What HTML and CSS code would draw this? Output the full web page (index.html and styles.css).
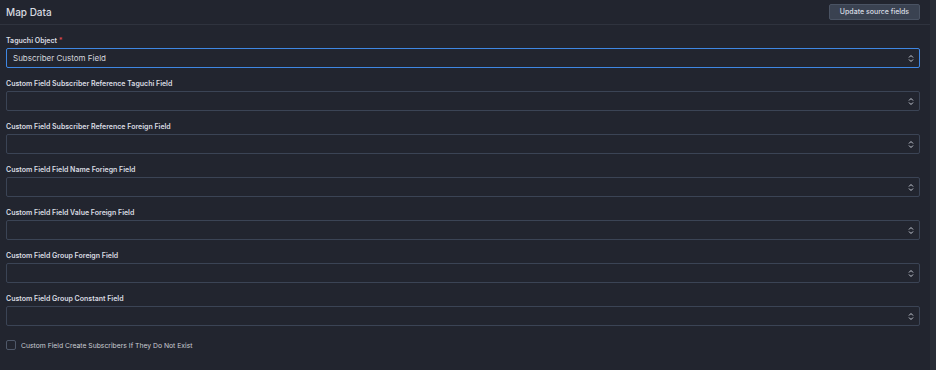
FILE: index.html
```html
<!DOCTYPE html>
<html>
<head>
<meta charset="utf-8">
<link rel="stylesheet" href="styles.css">
</head>
<body>
<div class="page">
  <main class="main">
    <header class="header">
      <h1 class="title">Map Data</h1>
      <button class="btn">Update source fields</button>
    </header>
    <form class="form">
      <div class="field">
        <label class="label">Taguchi Object <span class="req">*</span></label>
        <div class="select focused"><span class="value">Subscriber Custom Field</span><svg class="chev" viewBox="0 0 6 9"><path d="M1 3.5 L3 1.5 L5 3.5 M1 5.5 L3 7.5 L5 5.5" fill="none" stroke="#c9ced8" stroke-width="1"/></svg></div>
      </div>
      <div class="field">
        <label class="label">Custom Field Subscriber Reference Taguchi Field</label>
        <div class="select"><span class="value"></span><svg class="chev" viewBox="0 0 6 9"><path d="M1 3.5 L3 1.5 L5 3.5 M1 5.5 L3 7.5 L5 5.5" fill="none" stroke="#c9ced8" stroke-width="1"/></svg></div>
      </div>
      <div class="field">
        <label class="label">Custom Field Subscriber Reference Foreign Field</label>
        <div class="select"><span class="value"></span><svg class="chev" viewBox="0 0 6 9"><path d="M1 3.5 L3 1.5 L5 3.5 M1 5.5 L3 7.5 L5 5.5" fill="none" stroke="#c9ced8" stroke-width="1"/></svg></div>
      </div>
      <div class="field">
        <label class="label">Custom Field Field Name Foriegn Field</label>
        <div class="select"><span class="value"></span><svg class="chev" viewBox="0 0 6 9"><path d="M1 3.5 L3 1.5 L5 3.5 M1 5.5 L3 7.5 L5 5.5" fill="none" stroke="#c9ced8" stroke-width="1"/></svg></div>
      </div>
      <div class="field">
        <label class="label">Custom Field Field Value Foreign Field</label>
        <div class="select"><span class="value"></span><svg class="chev" viewBox="0 0 6 9"><path d="M1 3.5 L3 1.5 L5 3.5 M1 5.5 L3 7.5 L5 5.5" fill="none" stroke="#c9ced8" stroke-width="1"/></svg></div>
      </div>
      <div class="field">
        <label class="label">Custom Field Group Foreign Field</label>
        <div class="select"><span class="value"></span><svg class="chev" viewBox="0 0 6 9"><path d="M1 3.5 L3 1.5 L5 3.5 M1 5.5 L3 7.5 L5 5.5" fill="none" stroke="#c9ced8" stroke-width="1"/></svg></div>
      </div>
      <div class="field">
        <label class="label">Custom Field Group Constant Field</label>
        <div class="select"><span class="value"></span><svg class="chev" viewBox="0 0 6 9"><path d="M1 3.5 L3 1.5 L5 3.5 M1 5.5 L3 7.5 L5 5.5" fill="none" stroke="#c9ced8" stroke-width="1"/></svg></div>
      </div>
      <div class="check-row">
        <span class="checkbox"></span>
        <span class="check-label">Custom Field Create Subscribers If They Do Not Exist</span>
      </div>
    </form>
  </main>
  <div class="scroll"></div>
</div>
</body>
</html>
```
FILE: styles.css
```css
* { box-sizing: border-box; }
html, body { margin: 0; padding: 0; }
body {
  background: #22252f;
  font-family: Inter, "Noto Sans", sans-serif;
  color: #d6d9df;
  width: 936px;
  height: 370px;
  overflow: hidden;
}
.page {
  display: flex;
  height: 370px;
}
.main {
  flex: 1;
  display: flex;
  flex-direction: column;
}
.scroll {
  width: 6px;
  background: #292d37;
}
.header {
  height: 25px;
  display: flex;
  align-items: center;
  justify-content: space-between;
  padding: 0 10px 0 6px;
  border-bottom: 1px solid #2f333e;
}
.title {
  margin: 0;
  font-size: 10px;
  font-weight: 500;
  color: #d8dbe1;
}
.btn {
  height: 16px;
  width: 91px;
  padding: 0;
  font-family: inherit;
  font-size: 7px;
  font-weight: 500;
  color: #d8dce3;
  background: #3a4251;
  border: 1px solid #4a5363;
  border-radius: 2px;
  margin-top: -1px;
}
.form {
  padding: 10px 10px 0 6px;
  display: flex;
  flex-direction: column;
}
.field {
  display: flex;
  flex-direction: column;
  margin-bottom: 10px;
}
.label {
  height: 12px;
  line-height: 12px;
  font-size: 7px;
  font-weight: 600;
  color: #d9dce2;
  margin-bottom: 1px;
}
.req { color: #e5484d; }
.select {
  height: 20px;
  border: 1px solid #3b4455;
  border-radius: 2px;
  display: flex;
  align-items: center;
  justify-content: space-between;
  padding: 0 5px 0 6px;
}
.select.focused { border-color: #3f87e3; }
.value {
  font-size: 8px;
  color: #d4d7dd;
}
.chev {
  width: 6px;
  height: 9px;
}
.check-row {
  display: flex;
  align-items: center;
  gap: 5px;
  margin-top: 4px;
}
.checkbox {
  width: 10px;
  height: 10px;
  border: 1px solid #4f5869;
  border-radius: 2px;
}
.check-label {
  font-size: 6.8px;
  color: #c9ccd3;
}
```
